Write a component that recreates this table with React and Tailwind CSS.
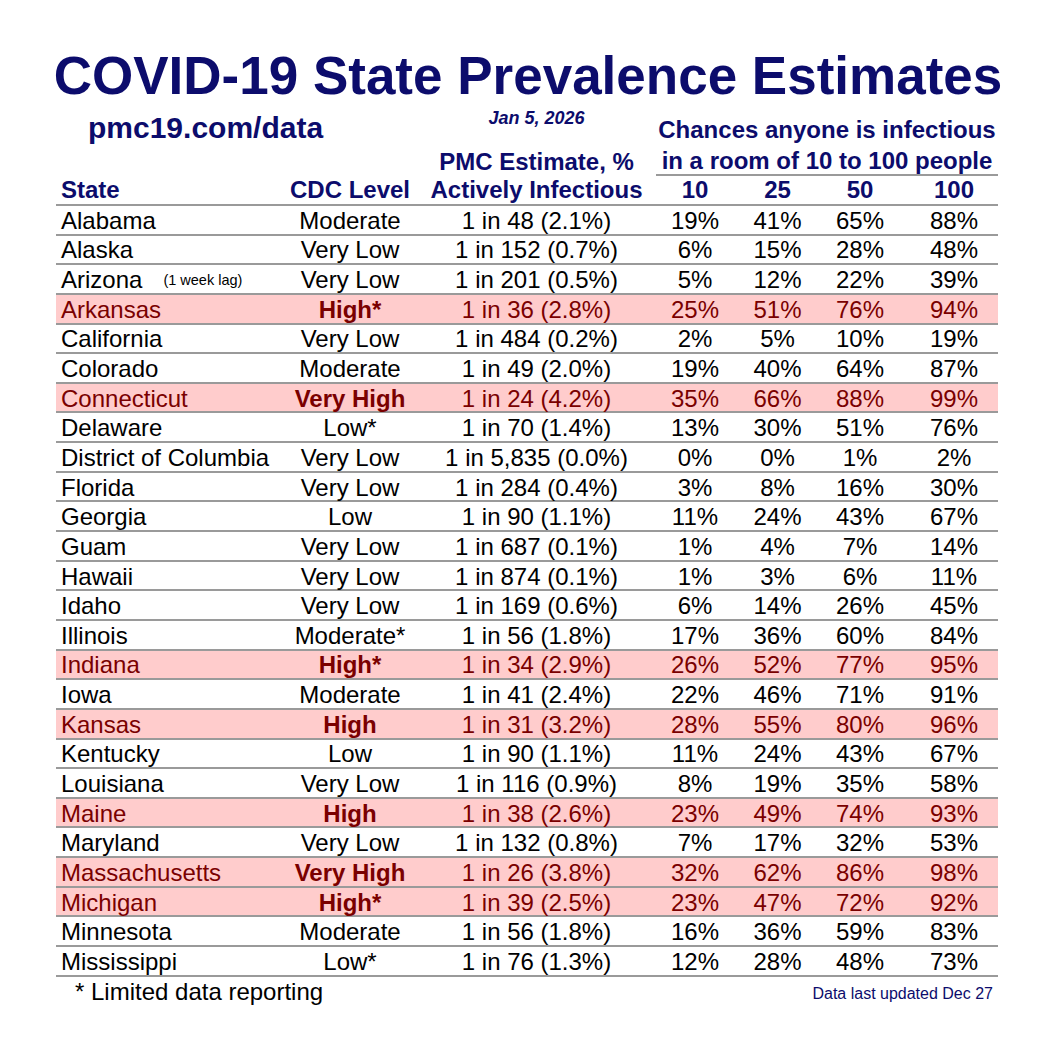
import React from "react";

const rows = [
  ["Alabama", "Moderate", "1 in 48 (2.1%)", 19, 41, 65, 88],
  ["Alaska", "Very Low", "1 in 152 (0.7%)", 6, 15, 28, 48],
  ["Arizona", "Very Low", "1 in 201 (0.5%)", 5, 12, 22, 39, false, "(1 week lag)"],
  ["Arkansas", "High*", "1 in 36 (2.8%)", 25, 51, 76, 94, true],
  ["California", "Very Low", "1 in 484 (0.2%)", 2, 5, 10, 19],
  ["Colorado", "Moderate", "1 in 49 (2.0%)", 19, 40, 64, 87],
  ["Connecticut", "Very High", "1 in 24 (4.2%)", 35, 66, 88, 99, true],
  ["Delaware", "Low*", "1 in 70 (1.4%)", 13, 30, 51, 76],
  ["District of Columbia", "Very Low", "1 in 5,835 (0.0%)", 0, 0, 1, 2],
  ["Florida", "Very Low", "1 in 284 (0.4%)", 3, 8, 16, 30],
  ["Georgia", "Low", "1 in 90 (1.1%)", 11, 24, 43, 67],
  ["Guam", "Very Low", "1 in 687 (0.1%)", 1, 4, 7, 14],
  ["Hawaii", "Very Low", "1 in 874 (0.1%)", 1, 3, 6, 11],
  ["Idaho", "Very Low", "1 in 169 (0.6%)", 6, 14, 26, 45],
  ["Illinois", "Moderate*", "1 in 56 (1.8%)", 17, 36, 60, 84],
  ["Indiana", "High*", "1 in 34 (2.9%)", 26, 52, 77, 95, true],
  ["Iowa", "Moderate", "1 in 41 (2.4%)", 22, 46, 71, 91],
  ["Kansas", "High", "1 in 31 (3.2%)", 28, 55, 80, 96, true],
  ["Kentucky", "Low", "1 in 90 (1.1%)", 11, 24, 43, 67],
  ["Louisiana", "Very Low", "1 in 116 (0.9%)", 8, 19, 35, 58],
  ["Maine", "High", "1 in 38 (2.6%)", 23, 49, 74, 93, true],
  ["Maryland", "Very Low", "1 in 132 (0.8%)", 7, 17, 32, 53],
  ["Massachusetts", "Very High", "1 in 26 (3.8%)", 32, 62, 86, 98, true],
  ["Michigan", "High*", "1 in 39 (2.5%)", 23, 47, 72, 92, true],
  ["Minnesota", "Moderate", "1 in 56 (1.8%)", 16, 36, 59, 83],
  ["Mississippi", "Low*", "1 in 76 (1.3%)", 12, 28, 48, 73],
];

const cols = "grid grid-cols-[216px_156px_217px_100px_65px_100px_88px]";

const App = () => {
  return (
    <div className="w-[1056px] h-[1056px] bg-white font-['Liberation_Sans',Arial,sans-serif] overflow-hidden">
      <h1 className="pt-[49px] text-center text-[53px] leading-none font-bold text-[#0c0c6c]">
        COVID-19 State Prevalence Estimates
      </h1>

      <div className="ml-[56px] w-[942px]">
        {/* header block */}
        <div className={`${cols} h-[45px] text-[#0c0c6c] font-bold`}>
          <div className="col-span-2 pl-[32px] pt-[11px] text-[30px] leading-[30px]">
            pmc19.com/data
          </div>
          <div className="pt-[7px] text-center text-[18px] leading-[18px] italic">
            Jan 5, 2026
          </div>
          <div className="col-span-4 ml-[11px] pt-[13px] text-center text-[24px] leading-[30px]">
            Chances anyone is infectious
          </div>
        </div>

        <div className={`${cols} h-[29px] text-[#0c0c6c] font-bold text-[24px] leading-none`}>
          <div className="col-span-2"></div>
          <div className="flex items-center justify-center">PMC Estimate, %</div>
          <div className="col-span-4 ml-[11px] border-b-2 border-[#9a9a9a] flex items-center justify-center">
            in a room of 10 to 100 people
          </div>
        </div>

        <div className={`${cols} h-[30px] text-[#0c0c6c] font-bold text-[24px] leading-none border-b-2 border-[#9a9a9a]`}>
          <div className="pl-[5px] flex items-center">State</div>
          <div className="flex items-center justify-center">CDC Level</div>
          <div className="flex items-center justify-center">Actively Infectious</div>
          <div className="flex items-center justify-center">10</div>
          <div className="flex items-center justify-center">25</div>
          <div className="flex items-center justify-center">50</div>
          <div className="flex items-center justify-center">100</div>
        </div>

        {/* data rows */}
        {rows.map(([state, level, est, a, b, c, d, hl, note]) => (
          <div
            key={state}
            className={`${cols} h-[29.65px] pt-[2px] border-b-2 border-[#9a9a9a] text-[24px] leading-none ${
              hl ? "bg-[#ffcccc] text-[#7a0000]" : "text-black"
            }`}
          >
            <div className="pl-[5px] flex items-center">
              {state}
              {note && <span className="ml-[21px] text-[14.5px] text-black">{note}</span>}
            </div>
            <div className={`flex items-center justify-center ${hl ? "font-bold" : ""}`}>
              {level}
            </div>
            <div className="flex items-center justify-center">{est}</div>
            <div className="flex items-center justify-center">{a}%</div>
            <div className="flex items-center justify-center">{b}%</div>
            <div className="flex items-center justify-center">{c}%</div>
            <div className="flex items-center justify-center">{d}%</div>
          </div>
        ))}

        <div className="flex items-center justify-between h-[30px]">
          <div className="pl-[19px] text-[24px] leading-none text-black">* Limited data reporting</div>
          <div className="pr-[5px] pt-[4px] text-[16px] leading-none text-[#0c0c6c]">
            Data last updated Dec 27
          </div>
        </div>
      </div>
    </div>
  );
};

export default App;
